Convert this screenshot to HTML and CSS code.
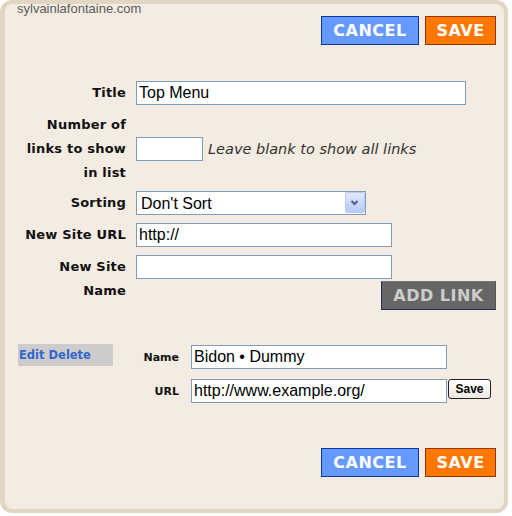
FILE: index.html
```html
<!DOCTYPE html>
<html lang="en">
<head>
    <meta charset="UTF-8">
    <meta name="viewport" content="width=device-width, initial-scale=1.0">
    <title>Link List Settings</title>
    <link rel="stylesheet" href="styles.css">
</head>
<body>
    <div class="frame">
        <span class="watermark">sylvainlafontaine.com</span>

        <div class="actions">
            <button class="btn btn-cancel">CANCEL</button>
            <button class="btn btn-save">SAVE</button>
        </div>

        <div class="form">
            <div class="row">
                <label class="label" for="title">Title</label>
                <div class="field">
                    <input class="text text-title" id="title" type="text" value="Top Menu">
                </div>
            </div>
            <div class="row">
                <label class="label" for="count">Number of<br>links to show<br>in list</label>
                <div class="field">
                    <input class="text text-count" id="count" type="text">
                    <span class="hint">Leave blank to show all links</span>
                </div>
            </div>
            <div class="row row-sorting">
                <label class="label" for="sorting">Sorting</label>
                <div class="field">
                    <div class="select-wrap">
                        <select class="select" id="sorting">
                            <option>Don't Sort</option>
                            <option>Alphabetically</option>
                            <option>Reverse Alphabetically</option>
                        </select>
                        <span class="select-arrow">
                            <svg width="18" height="19" viewBox="0 0 18 19">
                                <polyline points="5.5,8 8.5,11 11.5,8" fill="none" stroke="#4d6185" stroke-width="2"/>
                            </svg>
                        </span>
                    </div>
                </div>
            </div>
            <div class="row">
                <label class="label" for="newUrl">New Site URL</label>
                <div class="field">
                    <input class="text text-new" id="newUrl" type="text" value="http://">
                </div>
            </div>
            <div class="row row-top">
                <label class="label" for="newName">New Site<br>Name</label>
                <div class="field field-stack">
                    <input class="text text-new" id="newName" type="text">
                    <button class="btn btn-add">ADD LINK</button>
                </div>
            </div>
        </div>

        <div class="link-item">
            <div class="link-tools">Edit Delete</div>
            <div class="link-fields">
                <label class="link-label" for="linkName">Name</label>
                <input class="text text-link" id="linkName" type="text" value="Bidon • Dummy" autofocus>
                <label class="link-label" for="linkUrl">URL</label>
                <div class="link-url">
                    <input class="text text-link" id="linkUrl" type="text" value="http://www.example.org/">
                    <button class="btn-small">Save</button>
                </div>
            </div>
        </div>

        <div class="actions actions-bottom">
            <button class="btn btn-cancel">CANCEL</button>
            <button class="btn btn-save">SAVE</button>
        </div>
    </div>
</body>
</html>
```

FILE: styles.css
```css
body {
    margin: 0;
    background-color: #fff;
    font-family: 'DejaVu Sans', sans-serif;
}
.frame {
    position: relative;
    box-sizing: border-box;
    width: 508px;
    height: 513px;
    background-color: #f4ece2;
    border: 4px solid #e1d6c4;
    border-left-width: 5px;
    border-radius: 12px;
    padding: 12px 8px 0 0;
}
.watermark {
    position: absolute;
    top: -3px;
    left: 12px;
    font-family: 'Liberation Sans', Arial, sans-serif;
    font-size: 13px;
    line-height: 15px;
    color: #5a5a5a;
}
.actions {
    display: flex;
    justify-content: flex-end;
    gap: 6px;
}
.actions-bottom {
    margin-top: 45px;
}
.btn {
    box-sizing: border-box;
    height: 29px;
    padding: 0;
    border: 1px solid;
    font-family: 'DejaVu Sans', sans-serif;
    font-weight: bold;
    font-size: 16px;
    letter-spacing: 0.5px;
    color: #fff;
    cursor: pointer;
}
.btn-cancel {
    width: 98px;
    background-color: #6699ff;
    border-color: #0a3c9c;
}
.btn-save {
    width: 71px;
    background-color: #ff7700;
    border-color: #993300;
}
.btn-add {
    width: 115px;
    margin-top: 2px;
    align-self: flex-end;
    background-color: #666;
    color: #cdcdcd;
    border-color: #777 #555 #1f2f58 #1f2f58;
}

.form {
    margin-top: 36px;
}
.row {
    display: flex;
    align-items: center;
    margin-top: 8px;
}
.row:first-child {
    margin-top: 0;
}
.row-sorting {
    margin-top: 6px;
}
.row-top {
    align-items: flex-start;
}
.label {
    width: 121px;
    margin-right: 10px;
    text-align: right;
    font-weight: bold;
    font-size: 13px;
    letter-spacing: 0.2px;
    line-height: 24px;
    color: #111;
}
.field {
    flex: 1;
    display: flex;
    align-items: center;
    gap: 5px;
}
.field-stack {
    flex-direction: column;
    align-items: flex-start;
    gap: 0;
}
.text {
    box-sizing: border-box;
    height: 24px;
    padding: 0 2px;
    border: 1px solid #7f9db9;
    background-color: #fff;
    font-family: 'Liberation Sans', Arial, sans-serif;
    font-size: 16px;
    color: #000;
    outline: none;
    caret-color: #000;
}
.text-title {
    width: 330px;
}
.text-count {
    width: 67px;
}
.text-new {
    width: 256px;
}
.hint {
    font-style: italic;
    font-weight: 200;
    font-size: 14.5px;
    color: #333;
}
.select-wrap {
    position: relative;
    width: 230px;
    height: 24px;
}
.select {
    appearance: none;
    -webkit-appearance: none;
    box-sizing: border-box;
    width: 100%;
    height: 100%;
    margin: 0;
    padding: 0 0 0 4px;
    border: 1px solid #7f9db9;
    border-radius: 0;
    background-color: #fff;
    font-family: 'Liberation Sans', Arial, sans-serif;
    font-size: 16px;
    color: #000;
    outline: none;
}
.select-arrow {
    position: absolute;
    top: 1px;
    right: 1px;
    box-sizing: border-box;
    width: 20px;
    height: 21px;
    border: 1px solid #b9cbf3;
    border-radius: 2px;
    background: linear-gradient(#dfe8fd, #b7caf7);
    pointer-events: none;
}
.select-arrow svg {
    display: block;
}

.link-item {
    display: flex;
    align-items: flex-start;
    margin-top: 34px;
    padding-left: 13px;
}
.link-tools {
    box-sizing: border-box;
    width: 95px;
    height: 22px;
    padding-left: 1px;
    background-color: #cccccc;
    font-weight: bold;
    font-size: 11.5px;
    line-height: 22px;
    color: #3366cc;
}
.link-fields {
    display: grid;
    grid-template-columns: 66px auto;
    column-gap: 12px;
    row-gap: 10px;
    align-items: center;
    margin-top: 1px;
}
.link-label {
    text-align: right;
    font-weight: bold;
    font-size: 11px;
    color: #111;
}
.text-link {
    width: 256px;
}
.link-url {
    display: flex;
    align-items: flex-start;
    gap: 1px;
}
.btn-small {
    box-sizing: border-box;
    width: 43px;
    height: 20px;
    padding: 0;
    border: 1px solid #222;
    border-radius: 3px;
    background: linear-gradient(#ffffff, #ece9e0);
    font-family: 'Liberation Sans', Arial, sans-serif;
    font-weight: bold;
    font-size: 12px;
    color: #000;
    cursor: pointer;
}
```
